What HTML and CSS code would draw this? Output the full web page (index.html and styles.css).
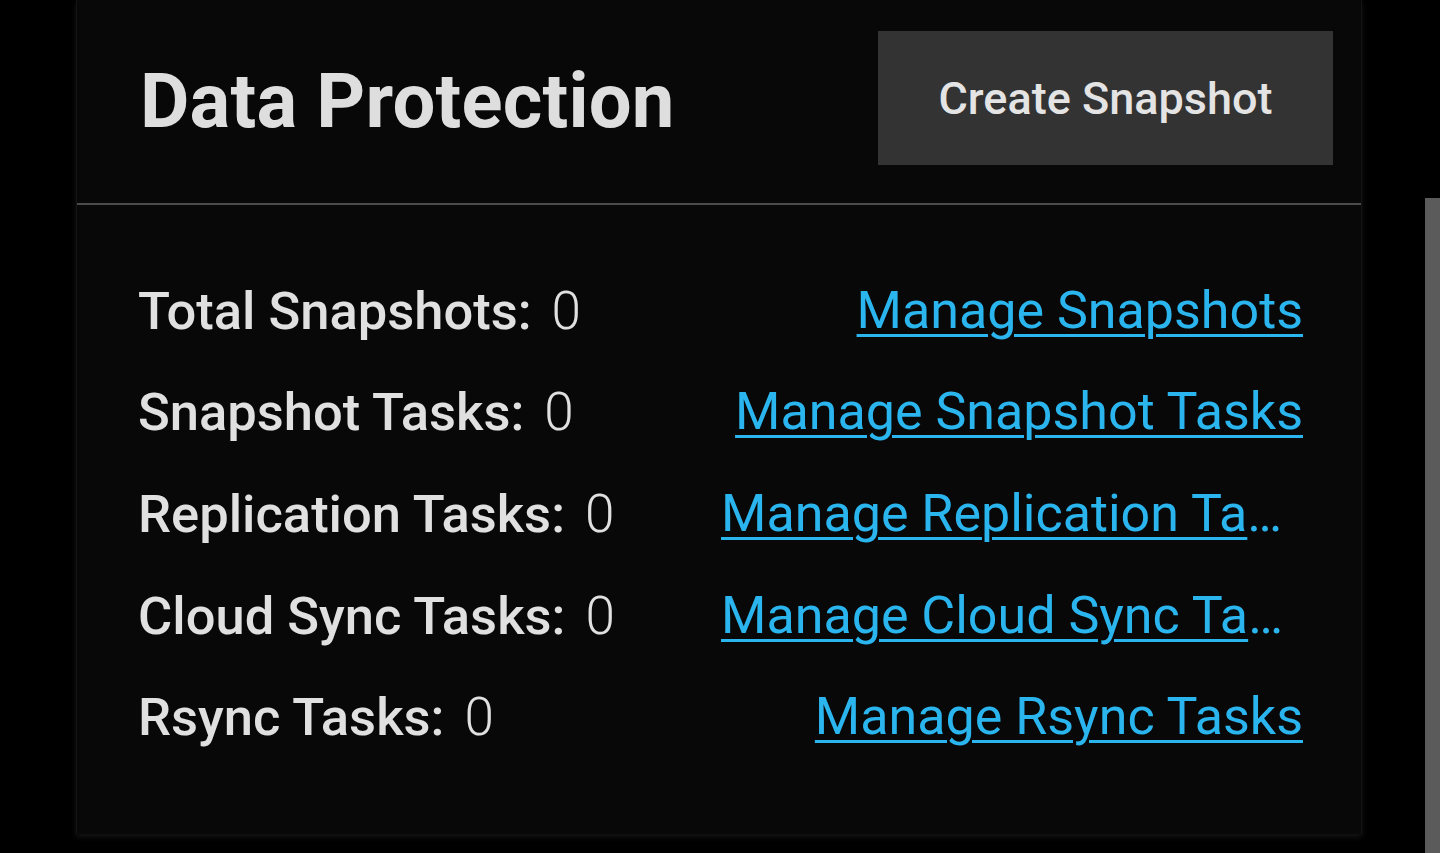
FILE: index.html
```html
<!DOCTYPE html>
<html lang="en">
<head>
<meta charset="utf-8">
<title>Data Protection</title>
<link rel="stylesheet" href="styles.css">
</head>
<body>
<div class="page">
  <section class="card">
    <header class="card-header">
      <h1 class="card-title">Data Protection</h1>
      <button class="btn" type="button">Create Snapshot</button>
    </header>
    <div class="card-body">
      <div class="row">
        <div class="stat"><span class="label">Total Snapshots:</span><span class="value">0</span></div>
        <div class="link-cell"><a href="#" class="link">Manage Snapshots</a></div>
      </div>
      <div class="row">
        <div class="stat"><span class="label">Snapshot Tasks:</span><span class="value">0</span></div>
        <div class="link-cell"><a href="#" class="link">Manage Snapshot Tasks</a></div>
      </div>
      <div class="row">
        <div class="stat"><span class="label">Replication Tasks:</span><span class="value">0</span></div>
        <div class="link-cell"><a href="#" class="link">Manage Replication Tasks</a></div>
      </div>
      <div class="row">
        <div class="stat"><span class="label">Cloud Sync Tasks:</span><span class="value">0</span></div>
        <div class="link-cell"><a href="#" class="link">Manage Cloud Sync Tasks</a></div>
      </div>
      <div class="row">
        <div class="stat"><span class="label">Rsync Tasks:</span><span class="value">0</span></div>
        <div class="link-cell"><a href="#" class="link">Manage Rsync Tasks</a></div>
      </div>
    </div>
  </section>
  <div class="scroll-track"><div class="scroll-thumb"></div></div>
</div>
</body>
</html>
```
FILE: styles.css
```css
html, body {
  margin: 0;
  padding: 0;
  background: #000;
  height: 853px;
  overflow: hidden;
}

body {
  font-family: Roboto, "Noto Sans", sans-serif;
  color: #e0e0e0;
}

.page {
  position: relative;
  height: 853px;
  display: flex;
  align-items: flex-start;
  padding-left: 76px;
}

.card {
  width: 1286px;
  height: 834px;
  background: #080808;
  border-left: 1px solid #141414;
  border-right: 1px solid #141414;
  box-shadow: 0 3px 6px rgba(60, 60, 60, 0.35);
  display: flex;
  flex-direction: column;
  box-sizing: border-box;
}

.card-header {
  height: 203px;
  flex: none;
  display: flex;
  align-items: flex-start;
  justify-content: space-between;
  padding: 0 28px 0 63px;
  border-bottom: 2px solid #4b4b4b;
}

.card-title {
  margin: 0;
  padding-top: 57px;
  font-size: 76px;
  line-height: 88px;
  font-weight: 700;
  color: #dedede;
  letter-spacing: 0.2px;
}

.btn {
  margin-top: 31px;
  width: 455px;
  height: 134px;
  border: none;
  background: #333333;
  color: #e4e4e4;
  font-family: inherit;
  font-size: 45px;
  font-weight: 500;
  padding: 0;
}

.card-body {
  display: flex;
  flex-direction: column;
  padding: 55px 58px 0 61px;
}

.row {
  height: 101.6px;
  display: flex;
  align-items: center;
  justify-content: space-between;
  gap: 40px;
}

.stat {
  display: flex;
  align-items: baseline;
  white-space: nowrap;
  flex: none;
}

.label {
  font-size: 52.5px;
  font-weight: 500;
  color: #e0e0e0;
}

.value {
  font-size: 53px;
  font-weight: 300;
  color: #e0e0e0;
  margin-left: 20px;
}

.link-cell {
  flex: 0 1 582px;
  min-width: 0;
  text-align: right;
  white-space: nowrap;
  overflow: hidden;
  text-overflow: ellipsis;
  font-size: 52px;
  color: #2bb5ee;
  line-height: 80px;
}

.link {
  color: #2bb5ee;
  text-decoration: underline;
  text-decoration-thickness: 3px;
  text-underline-offset: 6px;
}

.scroll-track {
  position: absolute;
  right: 0;
  top: 198px;
  width: 15px;
  bottom: 0;
}

.scroll-thumb {
  width: 15px;
  height: 100%;
  background: #5b5b5b;
}
```
